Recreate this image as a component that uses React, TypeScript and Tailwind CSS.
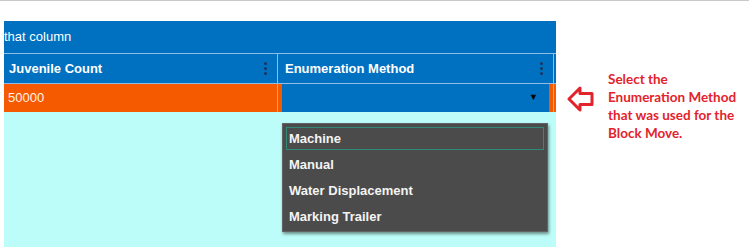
import React from 'react'

const options = ['Machine', 'Manual', 'Water Displacement', 'Marking Trailer']

function Kebab() {
  return (
    <div className="flex flex-col gap-[2px]">
      <span className="w-[3px] h-[3px] rounded-full bg-[#1c3560]"></span>
      <span className="w-[3px] h-[3px] rounded-full bg-[#1c3560]"></span>
      <span className="w-[3px] h-[3px] rounded-full bg-[#1c3560]"></span>
    </div>
  )
}

export default function App() {
  return (
    <div className="w-[749px] h-[247px] bg-white overflow-hidden" style={{ fontFamily: '"Liberation Sans", Arial, sans-serif' }}>
      <div className="h-px bg-[#c9c9c9]"></div>
      <div className="flex mt-[20px]">
        <div className="relative ml-1 w-[552px] h-[226px] flex flex-col bg-[#bdfdf9]">
          <div className="h-[32px] bg-[#0070c0] flex items-center overflow-hidden">
            <span className="text-[13px] text-white">that column</span>
          </div>
          <div className="h-[30px] bg-[#0070c0] border-t border-[#8fbde6] flex">
            <div className="w-[274px] flex items-center justify-between pl-[5px] pr-[10px] border-r border-[#8fbde6]">
              <span className="text-[13px] font-bold text-white">Juvenile Count</span>
              <Kebab />
            </div>
            <div className="w-[276px] flex items-center justify-between pl-[7px] pr-[10px] border-r border-[#8fbde6]">
              <span className="text-[13px] font-bold text-white">Enumeration Method</span>
              <Kebab />
            </div>
          </div>
          <div className="h-[29px] bg-[#f55a00] flex border-t border-[#8fbde6]">
            <div className="w-[274px] flex items-center pl-[4px] border-r border-[#f7a070]">
              <span className="text-[13px] text-[#fff3e6]">50000</span>
            </div>
            <div className="w-[276px] flex px-[4px] border-r border-[#f7a070]">
              <div className="flex-1 bg-[#0070c0] flex items-center justify-end pr-[11px]">
                <span className="text-[9px] text-black">▼</span>
              </div>
            </div>
          </div>
          <div className="absolute left-[278px] top-[102px] w-[266px] bg-[#4b4b4b] border border-[#626262] p-[3px] flex flex-col gap-[3px] shadow-[1px_2px_3px_rgba(0,0,0,0.45)]">
            {options.map((o, i) => (
              <div
                key={o}
                className={
                  'h-[23px] flex items-center text-[13px] font-bold text-[#f4f4f4] ' +
                  (i === 0 ? 'border border-[#2f8a78] pl-[2px]' : 'pl-[3px]')
                }
              >
                {o}
              </div>
            ))}
          </div>
        </div>
        <svg className="ml-[11px] mt-[65px]" width="27" height="26" viewBox="0 0 27 26">
          <polygon points="2,13 13,2 13,7.5 25,7.5 25,18.5 13,18.5 13,24" fill="white" stroke="#e3232b" strokeWidth="3" strokeLinejoin="round" />
        </svg>
        <div className="ml-[14px] mt-[49px] text-[13.5px] leading-[18px] font-bold text-[#e3232b]" style={{ fontFamily: 'Lato, "Open Sans", sans-serif' }}>
          Select the<br />
          Enumeration Method<br />
          that was used for the<br />
          Block Move.
        </div>
      </div>
    </div>
  )
}
